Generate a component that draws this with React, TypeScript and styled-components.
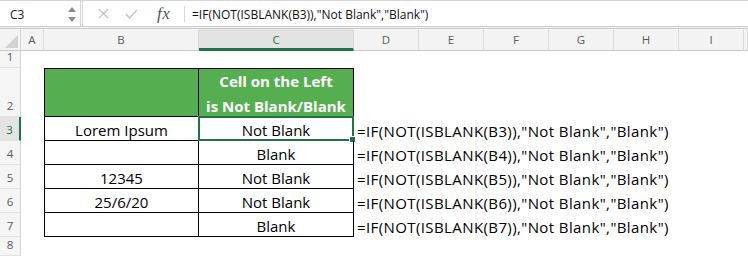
import React from 'react'
import styled, { createGlobalStyle } from 'styled-components'

const GlobalStyle = createGlobalStyle`
  html, body {
    margin: 0;
    padding: 0;
    background: #ffffff;
    font-family: 'Open Sans', 'Noto Sans', sans-serif;
  }
  #root {
    width: 748px;
    height: 256px;
    overflow: hidden;
  }
`

const GREEN = '#217346'
const FILL = '#55af51'

const Window = styled.div`
  display: flex;
  flex-direction: column;
  width: 748px;
  height: 256px;
`

const FormulaBar = styled.div`
  display: flex;
  align-items: stretch;
  height: 27px;
  border-top: 1px solid #d4d4d4;
  background: #ffffff;
`

const NameBox = styled.div`
  display: flex;
  align-items: center;
  justify-content: space-between;
  width: 83px;
  padding: 1px 4px 0 10px;
  box-sizing: border-box;
  font-size: 12px;
  color: #222;
  border-right: 3px double #d6d6d6;
`

const Spinner = styled.div`
  display: flex;
  flex-direction: column;
  gap: 5px;
  align-items: center;
  width: 9px;
`

const Arrow = styled.div<{ $down?: boolean }>`
  width: 0;
  height: 0;
  border-left: 4px solid transparent;
  border-right: 4px solid transparent;
  ${({ $down }) =>
    $down ? 'border-top: 5px solid #8a8a8a;' : 'border-bottom: 5px solid #8a8a8a;'}
`

const Tools = styled.div`
  display: flex;
  align-items: center;
  gap: 16px;
  padding-left: 15px;
  width: 97px;
  box-sizing: border-box;
`

const Fx = styled.span`
  font-family: 'Liberation Serif', 'DejaVu Serif', serif;
  font-style: italic;
  font-size: 17px;
  color: #555;
  margin-left: 3px;
  letter-spacing: 0.5px;
`

const FxDivider = styled.div`
  align-self: center;
  width: 1px;
  height: 16px;
  background: #d6d6d6;
  margin: 0 7px 0 4px;
`

const FormulaText = styled.div`
  display: flex;
  align-items: center;
  padding-top: 2px;
  font-size: 12px;
  color: #111;
  white-space: nowrap;
`

const BarSeparator = styled.div`
  height: 1px;
  border-top: 1px solid #cfcfcf;
  border-bottom: 1px solid #cfcfcf;
  background: #efefef;
`

const Sheet = styled.div`
  flex: 1;
  display: grid;
  grid-template-columns: 21px 23px 155px 155px repeat(6, 65px) 1fr;
  grid-template-rows: 22px 17px 49px repeat(5, 24px) 1fr;
  background: #ffffff;
`

const Corner = styled.div`
  position: relative;
  background: #f3f3f3;
  border-right: 1px solid #d6d6d6;
  border-bottom: 1px solid #c8c8c8;
  box-sizing: border-box;
  overflow: hidden;

  &::after {
    content: '';
    position: absolute;
    right: 2px;
    bottom: 2px;
    border-left: 13px solid transparent;
    border-bottom: 13px solid #d2d2d2;
  }
`

const ColHead = styled.div<{ $active?: boolean }>`
  display: flex;
  align-items: center;
  justify-content: center;
  box-sizing: border-box;
  font-size: 11.5px;
  color: ${({ $active }) => ($active ? GREEN : '#5a5a5a')};
  background: ${({ $active }) => ($active ? '#e3e3e3' : '#f3f3f3')};
  border-right: 1px solid #dadada;
  border-bottom: ${({ $active }) => ($active ? `3px solid ${GREEN}` : '1px solid #c8c8c8')};
  padding-top: ${({ $active }) => ($active ? '2px' : '0')};
`

const RowHead = styled.div<{ $active?: boolean }>`
  display: flex;
  align-items: flex-end;
  justify-content: center;
  box-sizing: border-box;
  padding-bottom: 2px;
  font-size: 11.5px;
  line-height: 16px;
  color: ${({ $active }) => ($active ? GREEN : '#5a5a5a')};
  background: ${({ $active }) => ($active ? '#e3e3e3' : '#f5f5f5')};
  border-right: ${({ $active }) => ($active ? `2px solid ${GREEN}` : '1px solid #d2d2d2')};
  border-bottom: 1px solid #e2e2e2;
`

const Cell = styled.div<{ $table?: boolean; $first?: boolean; $top?: boolean; $head?: boolean }>`
  position: relative;
  display: flex;
  align-items: flex-end;
  justify-content: center;
  box-sizing: border-box;
  font-size: 15px;
  line-height: 20px;
  color: #000;
  white-space: nowrap;
  ${({ $table, $first, $top }) =>
    $table
      ? `border-right: 1px solid #000; border-bottom: 1px solid #000;
         ${$first ? 'border-left: 1px solid #000;' : ''}
         ${$top ? 'border-top: 1px solid #000;' : ''}`
      : ''}
  ${({ $head }) =>
    $head
      ? `background: ${FILL}; color: #fff; font-weight: 700; flex-direction: column;
         align-items: center; justify-content: flex-end; gap: 5px;`
      : ''}
`

const FormulaCell = styled.div`
  display: flex;
  align-items: flex-end;
  padding-left: 3px;
  font-size: 15px;
  line-height: 20px;
  letter-spacing: 0.4px;
  color: #000;
  white-space: nowrap;
  overflow: visible;
  z-index: 1;
`

const Selection = styled.div`
  position: absolute;
  left: -1px;
  top: -1px;
  right: -1px;
  bottom: -1px;
  border: 2px solid ${GREEN};
  pointer-events: none;
`

const Handle = styled.div`
  position: absolute;
  right: -4px;
  bottom: -4px;
  width: 5px;
  height: 5px;
  background: ${GREEN};
  border: 1px solid #fff;
`

const columns = ['A', 'B', 'C', 'D', 'E', 'F', 'G', 'H', 'I', '']

const rows = [
  { b: 'Lorem Ipsum', c: 'Not Blank' },
  { b: '', c: 'Blank' },
  { b: '12345', c: 'Not Blank' },
  { b: '25/6/20', c: 'Not Blank' },
  { b: '', c: 'Blank' },
]

const formula = (ref: string) => `=IF(NOT(ISBLANK(${ref})),"Not Blank","Blank")`

const Blank = () => <div />

const App: React.FC = () => {
  return (
    <Window>
      <GlobalStyle />
      <FormulaBar>
        <NameBox>
          <span>C3</span>
          <Spinner>
            <Arrow />
            <Arrow $down />
          </Spinner>
        </NameBox>
        <Tools>
          <svg width="11" height="11" viewBox="0 0 11 11">
            <path d="M1 1 L10 10 M10 1 L1 10" stroke="#c4c4c4" strokeWidth="1.4" fill="none" />
          </svg>
          <svg width="13" height="10" viewBox="0 0 13 10">
            <path d="M1 5 L4.5 9 L12 1" stroke="#c4c4c4" strokeWidth="1.4" fill="none" />
          </svg>
          <Fx>fx</Fx>
        </Tools>
        <FxDivider />
        <FormulaText>{formula('B3')}</FormulaText>
      </FormulaBar>
      <BarSeparator />
      <Sheet>
        <Corner />
        {columns.map((c, i) =>
          c ? (
            <ColHead key={c} $active={c === 'C'}>
              {c}
            </ColHead>
          ) : (
            <ColHead key={'x' + i} />
          )
        )}

        {/* row 1 */}
        <RowHead>1</RowHead>
        {columns.map((_, i) => (
          <Blank key={'r1' + i} />
        ))}

        {/* row 2: header */}
        <RowHead>2</RowHead>
        <Blank />
        <Cell $table $first $top $head />
        <Cell $table $top $head>
          <span>Cell on the Left</span>
          <span>is Not Blank/Blank</span>
        </Cell>
        {columns.slice(3).map((_, i) => (
          <Blank key={'r2' + i} />
        ))}

        {rows.map((r, idx) => {
          const n = idx + 3
          return (
            <React.Fragment key={n}>
              <RowHead $active={n === 3}>{n}</RowHead>
              <Blank />
              <Cell $table $first>
                {r.b}
              </Cell>
              <Cell $table>
                {r.c}
                {n === 3 && (
                  <Selection>
                    <Handle />
                  </Selection>
                )}
              </Cell>
              <FormulaCell>{formula('B' + n)}</FormulaCell>
              {columns.slice(4).map((_, i) => (
                <Blank key={'r' + n + i} />
              ))}
            </React.Fragment>
          )
        })}

        <RowHead>8</RowHead>
      </Sheet>
    </Window>
  )
}

export default App
